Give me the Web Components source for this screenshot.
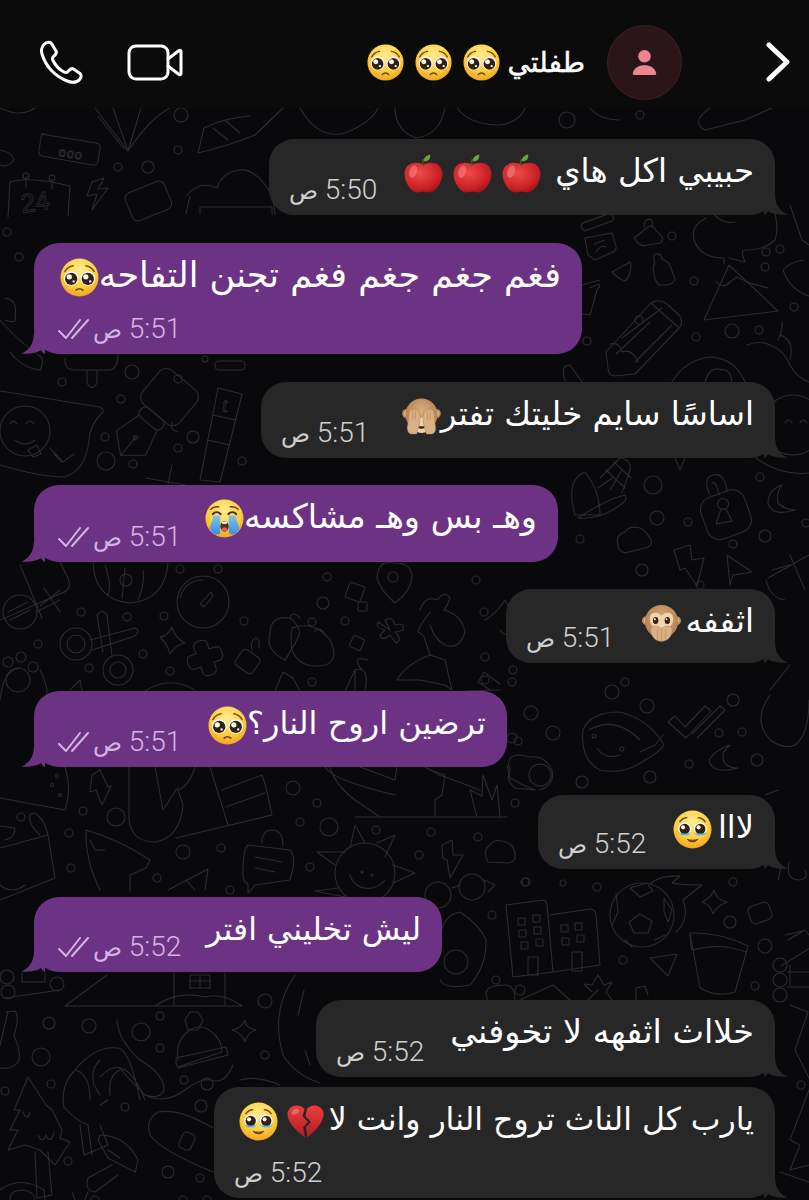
<!DOCTYPE html>
<html lang="ar">
<head>
<meta charset="utf-8">
<title>Chat</title>
<style>
html,body{margin:0;padding:0;background:#09080a}
body{font-family:"DejaVu Sans","Noto Sans",sans-serif;color:#fff}
</style>
</head>
<body>
<chat-screen>
  <chat-header slot="header" title-text="طفلتي"></chat-header>
  <chat-bubble side="in" time="5:50" style="--w:506px;--h:76px;--mt:31px;--fs:32.500px">حبيبي اكل هاي<chat-emoji name="apple" style="margin-right:14px"></chat-emoji><chat-emoji name="apple" style="margin-right:10px"></chat-emoji><chat-emoji name="apple" style="margin-right:10px"></chat-emoji></chat-bubble>
  <chat-bubble side="out" time="5:51" style="--w:548px;--h:111px;--mt:28px;--fs:35px">فغم جغم جغم فغم تجنن التفاحه<chat-emoji name="pleading"></chat-emoji></chat-bubble>
  <chat-bubble side="in" time="5:51" style="--w:514px;--h:76px;--mt:28px;--fs:32.500px">اساسًا سايم خليتك تفتر<chat-emoji name="seeno"></chat-emoji></chat-bubble>
  <chat-bubble side="out" time="5:51" style="--w:524px;--h:77px;--mt:27px;--fs:33.500px">وهـ بس وهـ مشاكسه<chat-emoji name="sob"></chat-emoji></chat-bubble>
  <chat-bubble side="in" time="5:51" style="--w:269px;--h:74px;--mt:27px;--fs:32.500px">اثففه<chat-emoji name="speakno" style="margin-right:5px"></chat-emoji></chat-bubble>
  <chat-bubble side="out" time="5:51" style="--w:473px;--h:76px;--mt:28px;--fs:32px">ترضين اروح النار؟<chat-emoji name="pleading"></chat-emoji></chat-bubble>
  <chat-bubble side="in" time="5:52" style="--w:237px;--h:74px;--mt:28px;--fs:32px">لااا<chat-emoji name="holding" style="margin-right:6px"></chat-emoji></chat-bubble>
  <chat-bubble side="out" time="5:52" style="--w:408px;--h:75px;--mt:28px;--fs:31.500px">ليش تخليني افتر</chat-bubble>
  <chat-bubble side="in" time="5:52" style="--w:459px;--h:77px;--mt:28px;--fs:33.500px">خلااث اثفهه لا تخوفني</chat-bubble>
  <chat-bubble side="in" time="5:52" style="--w:561px;--h:111px;--mt:10px;--fs:31.500px">يارب كل الناث تروح النار وانت لا<chat-emoji name="broken" style="margin-right:4px"></chat-emoji><chat-emoji name="holding" style="margin-right:8px"></chat-emoji></chat-bubble>
</chat-screen>

<script>
class ChatScreen extends HTMLElement{
  constructor(){super();
    const s=this.attachShadow({mode:'open'});
    s.innerHTML=`<style>
      :host{display:block;position:relative;width:809px;height:1200px;overflow:hidden;background:#09080a}
      .col{position:relative;display:flex;flex-direction:column;padding:0 34px}
      header{position:relative;z-index:2}
      chat-wallpaper{position:absolute;inset:0}
    </style><chat-wallpaper></chat-wallpaper><header><slot name="header"></slot></header><div class="col"><slot></slot></div>`;
  }
}
class ChatHeader extends HTMLElement{
  constructor(){super();
    const s=this.attachShadow({mode:'open'});
    const t=this.getAttribute('title-text')||'';
    s.innerHTML=`<style>
      :host{display:flex;align-items:center;box-sizing:border-box;height:108px;background:#0b0b0b;padding:16px 19px 0 40px}
      svg{display:block;fill:none;stroke:#fff;stroke-linecap:round;stroke-linejoin:round}
      .video{margin-left:44px}
      .title{margin-left:auto;display:flex;align-items:center;gap:11px;font:400 28px "DejaVu Sans",sans-serif;color:#fff;-webkit-text-stroke:.5px #fff}
      .title span{direction:rtl;margin-left:-4px}
      chat-emoji{--e:37px;margin:0;-webkit-text-stroke:0}
      .avatar{width:75px;height:75px;margin:0 84px 0 22px;border-radius:50%;background:#2a1519;border:1px solid #3a2226;box-sizing:border-box;display:flex;align-items:center;justify-content:center}
      .avatar svg{fill:#ee8490;stroke:none}
    </style>
    <svg width="43" height="44" viewBox="0 0 43 44" stroke-width="3"><path d="M4 4.500C6.500 2 10 1.500 11.500 3.500L16 11C17 13 16 14.500 14 16C12.500 17 12 18.500 13 20.500C15.500 25.500 19 29.500 24 32C26 33 27.500 32.500 28.500 31C30 29 31.500 28 33.500 29L40 33.500C41.500 34.500 41.500 37 40 39C37.500 42 33 43 28.500 41.500C15 37 5.500 26 2 14C1 10.500 1.500 7 4 4.500Z"/></svg>
    <svg class="video" width="56" height="37" viewBox="0 0 56 37" stroke-width="3"><rect x="2" y="2" width="39" height="33" rx="7"/><path d="M41 15L52 6.500C53 5.800 54 6.300 54 7.500V29.500C54 30.700 53 31.200 52 30.500L41 22"/></svg>
    <div class="title"><chat-emoji name="pleading"></chat-emoji><chat-emoji name="pleading"></chat-emoji><chat-emoji name="pleading"></chat-emoji><span>${t}</span></div>
    <div class="avatar"><svg width="25" height="27" viewBox="0 0 28 30"><circle cx="14" cy="8" r="7"/><path d="M2.500 29C1 29 .5 28 1 26.500C2.500 21 7.500 18 14 18C20.500 18 25.500 21 27 26.500C27.500 28 27 29 25.500 29Z"/></svg></div>
    <svg width="24" height="40" viewBox="0 0 24 40" stroke-width="5"><path d="M3 3L21 20L3 37"/></svg>`;
  }
}
class ChatBubble extends HTMLElement{
  constructor(){super();
    const s=this.attachShadow({mode:'open'});
    const out=this.getAttribute('side')==='out', time=this.getAttribute('time')||'';
    const bg=out?'#6c3384':'#272727';
    const mc=out?'#d4b3e4':'#cfcfcf';
    s.innerHTML=`<style>
      :host{display:block;position:relative;box-sizing:border-box;width:var(--w);height:var(--h);margin-top:var(--mt);border-radius:25px;background:${bg};flex:none;align-self:${out?'flex-start':'flex-end'}}
      .wrap{display:grid;box-sizing:border-box;height:100%;padding:12px 21px 11px ${out?'24px':'20px'};color:#fff}
      .text{grid-area:1/1;justify-self:end;align-self:start;direction:rtl;white-space:nowrap;font:400 var(--fs)/40px "DejaVu Sans",sans-serif}
      .meta{grid-area:1/1;justify-self:start;align-self:end;display:flex;align-items:center;gap:3px;color:${mc};height:28px}
      .t{direction:rtl;font:300 28px/28px Roboto,"DejaVu Sans",sans-serif;white-space:nowrap}
      .t i{font:300 24px/28px "DejaVu Sans",sans-serif;font-style:normal}
      .tail{position:absolute;bottom:0;${out?'left:-13px;transform:scaleX(-1)':'right:-13px'}}
      .tail path{fill:${bg}}
      svg.chk{fill:none;stroke:${mc};stroke-width:2;stroke-linecap:round;stroke-linejoin:round;display:block}
    </style>
    <div class="wrap">
      <div class="text"><slot></slot></div>
      <div class="meta">${out?'<svg class="chk" width="32" height="22" viewBox="0 0 32 22"><path d="M1 13L8 20L22 2"/><path d="M14 20L30 2"/></svg>':''}<span class="t">${time} <i>ص</i></span></div>
    </div>
    <svg class="tail" width="24" height="22" viewBox="0 0 24 22"><path d="M0 0H11C11 10 14 17 23.500 21.700C15 22 8 21 4 18C3 20 1.500 21.500 0 22Z"/></svg>`;
  }
}
const G=`<defs>
<radialGradient id="f" cx=".5" cy=".3" r=".78"><stop offset="0" stop-color="#ffeb94"/><stop offset=".55" stop-color="#fcd03f"/><stop offset=".88" stop-color="#f4a622"/><stop offset="1" stop-color="#e58a18"/></radialGradient>
<radialGradient id="m" cx=".5" cy=".4" r=".7"><stop offset="0" stop-color="#dcae7c"/><stop offset="1" stop-color="#a9764a"/></radialGradient>
<radialGradient id="a" cx=".4" cy=".35" r=".75"><stop offset="0" stop-color="#ef4a4a"/><stop offset=".7" stop-color="#c81f25"/><stop offset="1" stop-color="#8d1116"/></radialGradient>
<linearGradient id="h" x1="0" y1="0" x2="0" y2="1"><stop offset="0" stop-color="#e8403f"/><stop offset="1" stop-color="#b41a22"/></linearGradient>
<linearGradient id="b" x1="0" y1="0" x2="0" y2="1"><stop offset="0" stop-color="#7fc4ef"/><stop offset="1" stop-color="#3a8fdc"/></linearGradient>
</defs>`;
const FACE='<circle cx="20" cy="20" r="19.500" fill="url(#f)"/>';
const EM={
 pleading:FACE+`<path d="M5 14C7 10.500 10 8.500 13.500 8M35 14C33 10.500 30 8.500 26.500 8" fill="none" stroke="#7a4a12" stroke-width="1.500" stroke-linecap="round"/>
  <circle cx="11.500" cy="21" r="7.500" fill="#fff"/><circle cx="28.500" cy="21" r="7.500" fill="#fff"/><circle cx="11.500" cy="21.500" r="6.300" fill="#33200f"/><circle cx="28.500" cy="21.500" r="6.300" fill="#33200f"/>
  <circle cx="9.500" cy="19.300" r="2.700" fill="#fff"/><circle cx="26.500" cy="19.300" r="2.700" fill="#fff"/><circle cx="14" cy="24" r="1.200" fill="#fff"/><circle cx="31" cy="24" r="1.200" fill="#fff"/>
  <path d="M16.500 33C18.500 31.200 21.500 31.200 23.500 33" fill="none" stroke="#6b3d10" stroke-width="1.600" stroke-linecap="round"/>`,
 holding:FACE+`<path d="M7 12C9 9.500 11.500 8 14 8M33 12C31 9.500 28.500 8 26 8" fill="none" stroke="#7a4a12" stroke-width="1.500" stroke-linecap="round"/>
  <circle cx="12" cy="19.500" r="6.600" fill="#fff"/><circle cx="28" cy="19.500" r="6.600" fill="#fff"/><circle cx="12" cy="19.500" r="5.300" fill="#33200f"/><circle cx="28" cy="19.500" r="5.300" fill="#33200f"/>
  <circle cx="10.300" cy="17.800" r="2.100" fill="#fff"/><circle cx="26.300" cy="17.800" r="2.100" fill="#fff"/>
  <path d="M5.500 22.500C7 27.500 17 27.500 18.500 22.500C16.500 24.700 7.500 24.700 5.500 22.500ZM21.500 22.500C23 27.500 33 27.500 34.500 22.500C32.500 24.700 23.500 24.700 21.500 22.500Z" fill="#58b3ea"/>
  <path d="M14.500 30C17 33.500 23 33.500 25.500 30C23 31.300 17 31.300 14.500 30Z" fill="#6b3d10" stroke="#6b3d10" stroke-linejoin="round"/>`,
 sob:FACE+`<path d="M6 10.500C8.500 8 11 7.500 14 8M34 10.500C31.500 8 29 7.500 26 8" fill="none" stroke="#6b3d10" stroke-width="1.500" stroke-linecap="round"/>
  <path d="M8 15.500C10 12.800 14 12.800 16 15.500M24 15.500C26 12.800 30 12.800 32 15.500" fill="none" stroke="#4a2c10" stroke-width="2" stroke-linecap="round"/>
  <path d="M8.500 17H15.500V35C13 37 10.500 36.500 8 35L4.500 30C6 26 8 22 8.500 17ZM24.500 17H31.500C32 22 34 26 35.500 30L32 35C29.500 36.500 27 37 24.500 35Z" fill="url(#b)"/>
  <ellipse cx="20" cy="28" rx="4.300" ry="5.500" fill="#5c2a12"/><ellipse cx="20" cy="24.300" rx="3" ry="1.300" fill="#fff"/><ellipse cx="20" cy="31" rx="2.800" ry="2" fill="#e0615a"/>`,
 apple:`<path d="M20 11C14 7.500 4 8 2.500 19C2 28 8 39 14 39.500C16.500 39.700 18 38.500 20 38.500C22 38.500 23.500 39.700 26 39.500C32 39 38 28 37.500 19C36 8 26 7.500 20 11Z" fill="url(#a)"/>
  <ellipse cx="10.500" cy="18" rx="3.500" ry="6.500" fill="#f58b86" opacity=".55" transform="rotate(15 10.500 18)"/>
  <path d="M19.500 12C19.500 9 18.500 7 20 5" stroke="#6b4a24" stroke-width="1.300" fill="none"/>
  <path d="M20 7.500C20.500 3 23.500 1 26 .5C27 4 25 8 20 7.500Z" fill="#63a832"/>`,
 broken:`<path d="M19 7C15 2 5 2 2 9.500C-.5 17 7 27 19.500 36.500L17.500 26L22.500 20.500L17 14.500Z" fill="url(#h)"/><path d="M21.500 7C25.500 2 35 2 38 9.500C40.500 17 33 27 22 36.500L20.500 26L25.500 20.500L20 14.500Z" fill="url(#h)"/>
  <ellipse cx="9.500" cy="10" rx="4" ry="2.500" fill="#f58b86" opacity=".6" transform="rotate(-30 9.500 10)"/>`,
 seeno:`<circle cx="5" cy="17" r="4.800" fill="#c48c5a"/><circle cx="35" cy="17" r="4.800" fill="#c48c5a"/><circle cx="5" cy="17" r="2.800" fill="#e5bd92"/><circle cx="35" cy="17" r="2.800" fill="#e5bd92"/>
  <circle cx="20" cy="18" r="16.500" fill="url(#m)"/>
  <ellipse cx="20" cy="29" rx="8.500" ry="8" fill="#efd4ae"/><path d="M15.500 30C18 33.500 22 33.500 24.500 30Z" fill="#3e2210"/>
  <path d="M6 28C4.500 33 6 37 9 38H15C16.500 33 18.500 27 18.500 22C18.500 18 17.500 15 16 13C13 12 9 12 7.500 15C7 19 6.500 23 6 28ZM34 28C35.500 33 34 37 31 38H25C23.500 33 21.500 27 21.500 22C21.500 18 22.500 15 24 13C27 12 31 12 32.500 15C33 19 33.500 23 34 28Z" fill="#d9b184" stroke="#a67b4e" stroke-width=".5"/>
  <path d="M11 14V23M14 13.500V23M26 13.500V23M29 14V23" stroke="#a67b4e" stroke-width=".5"/>`,
 speakno:`<circle cx="4.500" cy="17" r="4.500" fill="#c48c5a"/><circle cx="35.500" cy="17" r="4.500" fill="#c48c5a"/><circle cx="4.500" cy="17" r="2.600" fill="#e5bd92"/><circle cx="35.500" cy="17" r="2.600" fill="#e5bd92"/>
  <circle cx="20" cy="18" r="17" fill="url(#m)"/>
  <path d="M20 12C16 7 8 8 8 15C8 20 11 24 14 25H26C29 24 32 20 32 15C32 8 24 7 20 12Z" fill="#efd4ae"/>
  <ellipse cx="14" cy="17" rx="2.800" ry="3.600" fill="#3a2010"/><ellipse cx="26" cy="17" rx="2.800" ry="3.600" fill="#3a2010"/><circle cx="13.200" cy="15.600" r="1" fill="#fff"/><circle cx="25.200" cy="15.600" r="1" fill="#fff"/>
  <path d="M9 26C10 23 13 22 16 23L20 25L24 23C27 22 30 23 31 26C31 33 27 38 20 38.500C13 38 9 33 9 26Z" fill="#d9b184" stroke="#a67b4e" stroke-width=".5"/>
  <path d="M16 26V36M20 26V38M24 26V36" stroke="#a67b4e" stroke-width=".5"/>`
};
class ChatEmoji extends HTMLElement{
  constructor(){super();
    const s=this.attachShadow({mode:'open'});
    const n=this.getAttribute('name');
    const vb=n==='apple'?'viewBox="2 0 36 40" preserveAspectRatio="none"':'viewBox="0 0 40 40"';
    s.innerHTML=`<style>:host{display:inline-block;width:var(--e,39px);height:var(--e,39px);vertical-align:middle}svg{display:block;width:100%;height:100%}</style>
    <svg ${vb}>${G}${EM[n]||''}</svg>`;
  }
}
const DOTS=[[181,115,7],[567,120,8],[178,150,4],[118,167,4],[148,167,6],[640,115,4],[7,232,4],[19,257,4],[205,359,3],[178,379,4],[132,372,7],[62,382,4],[121,399,4],[105,437,4],[193,437,6],[178,448,4],[106,461,9],[133,464,4],[242,461,4],
[672,236,4],[694,281,4],[639,320,4],[696,337,4],[732,331,7],[759,330,4],[587,341,4],[780,249,4],[766,252,4],[765,267,4],[794,307,4],
[653,485,9],[657,518,7],[688,522,4],[580,539,4],[642,570,6],[765,536,6],[733,544,4],[760,477,4],[806,523,4],[700,585,4],
[81,612,4],[38,644,4],[127,617,4],[143,654,4],[164,616,4],[244,621,4],[170,671,4],[89,668,4],[312,622,4],[323,603,6],[327,577,4],[345,621,4],[476,699,4],[180,569,4],[218,569,4],[312,682,4],[485,657,4],[512,682,4],[513,670,4],[484,612,4],
[612,692,7],[647,706,7],[531,713,7],[553,733,7],[582,782,6],[650,777,6],[733,700,6],[757,760,6],[689,764,4],[719,733,4],[742,732,4],[476,580,4],[485,680,4],[518,741,4],[625,682,4],[512,738,5],[515,803,4],
[116,817,9],[293,788,7],[329,827,9],[183,852,7],[83,811,4],[69,833,4],[71,868,4],[221,848,4],[157,878,4],[317,803,4],[300,822,4],[310,867,4],[376,830,4],[431,832,4],[478,837,4],[419,855,4],[526,882,4],[21,817,4],[230,890,4],
[525,882,4],[597,887,4],[733,882,4],[492,915,4],[623,960,4],[496,980,4],[730,922,6],[765,946,7],[755,986,4],[563,883,3],[801,1085,4],[520,990,5],
[49,1023,6],[89,1026,7],[41,1057,9],[51,1084,4],[5,1091,4],[125,1107,4],[141,1032,9],[160,1016,4],[160,1048,4],[184,1080,4],[207,1084,6],[201,1106,6],[265,1001,7],[265,1055,4],[68,1161,4],[168,1172,6],[200,1178,4],[95,1200,4],[183,1200,4],[207,1200,4]];
const ART=`
<!-- top strip -->
<path d="M41 134L96 143Q101 144 100 149L98 161Q97 166 92 165L42 156Q38 155 39 150L41 138Q41 134 45 134Z"/>
<text x="58" y="156" font-size="13" font-family="Liberation Sans" transform="rotate(9 58 156)" fill="none" letter-spacing="1">ooo</text>
<path d="M95 108L128 151L141 108M113 108L128 151M170 108Q150 118 128 151M98 116L124 149"/>
<path d="M198 153L204 128Q224 118 250 116M198 153Q225 147 255 135L283 108M213 128L228 140M225 120L240 133"/>
<path d="M10 182Q30 176 70 186L68 216M10 182L8 217M26 177V187M52 179V189"/><circle cx="26" cy="176" r="3"/><circle cx="52" cy="178" r="3"/>
<text x="22" y="213" font-size="26" font-family="Liberation Sans" transform="rotate(-8 22 213)">24</text>
<path d="M92 182L87 196L97 194L92 210L108 188L98 189L104 178Z"/>
<g transform="rotate(-22 148 200)"><rect x="127" y="186" width="42" height="30" rx="6"/></g>
<path d="M187 195Q200 180 217 188Q222 172 240 170Q256 168 272 195M190 196L186 214M272 195L275 214M200 214V207H272V214"/>
<path d="M300 108Q318 140 345 133Q372 122 378 108M395 108Q395 130 416 138Q440 135 445 108M457 108Q470 125 500 125Q520 122 525 108M590 108Q600 120 620 120M710 108Q690 122 705 130L745 120L772 108"/>
<path d="M0 150Q12 152 14 160Q8 168 0 165M0 108Q20 118 35 108"/>
<!-- right of bubble 2 -->
<g transform="rotate(-20 598 225)"><rect x="582" y="218" width="33" height="8" rx="3"/></g>
<path d="M585 238L612 233L616 246Q617 250 613 252L595 260L588 255ZM594 244L605 240M596 252Q600 245 606 247"/>
<path d="M634 238L648 227Q651 225 653 227L662 237Q664 240 660 243L648 245Q642 247 638 243ZM644 227Q644 219 650 219Q654 220 652 226"/>
<path d="M612 272Q622 267 630 262Q632 264 630 272Q628 280 624 281Q618 278 612 272Z"/>
<path d="M655 262Q652 256 656 254Q661 253 662 259L669 263L675 279Q674 284 666 285L660 285Q656 283 655 279L653 268Z"/>
<path d="M704 320L729 265L778 311Z"/><path d="M724 264V258Q700 258 694 240Q690 226 706 218M729 258L745 262Q740 250 745 250Q765 250 775 240Q780 225 772 205"/>
<path d="M716 281Q722 290 730 282L737 277L750 283L768 288M709 208Q720 225 735 222"/>
<path d="M590 288Q605 280 597 290L590 315L578 313M582 285L600 280"/>
<path d="M608 368L606 352L651 303Q660 298 667 304L680 316Q683 322 680 327L635 374L614 376Q608 375 608 368ZM622 338L662 308M651 303L678 327M616 354L650 322M635 362L672 325"/><path d="M610 344Q620 342 622 352Q632 348 638 362"/>
<path d="M804 260Q790 262 783 270Q790 290 809 296M747 345Q760 340 770 345Q784 350 790 365Q797 378 809 382M778 340Q783 330 782 322M790 360Q795 340 780 335"/>
<path d="M672 382Q685 360 710 357Q735 358 745 382M705 382Q710 365 722 370Q730 368 732 382"/>
<path d="M790 205L802 240L809 245M565 380Q560 365 570 365L582 382"/>
<!-- left of bubble 3 -->
<path d="M0 391L100 407Q106 410 101 414Q90 425 89 440Q86 470 65 477Q40 477 0 465"/>
<circle cx="25" cy="431" r="25"/><path d="M10 424Q13 418 17 424M26 424Q29 418 34 424M28 450L37 445L41 454L33 457Z M15 440Q25 448 35 440"/><path d="M50 448L63 462L74 454M54 454L62 462"/>
<path d="M65 358Q64 370 75 370H110Q118 368 118 354M87 370V383Q92 392 97 383V370"/><rect x="215" y="361" width="30" height="9" rx="4"/>
<g transform="rotate(40 160 410)"><rect x="135" y="372" width="48" height="44" rx="9"/><rect x="145" y="416" width="28" height="12" rx="5"/><path d="M147 428L140 454L159 470L178 454L171 428M159 447V470"/><circle cx="159" cy="447" r="2"/></g>
<path d="M172 422Q170 432 178 431"/>
<path d="M218 388L242 394L220 482L200 480ZM213 415L236 420M207 440L230 445"/><text x="222" y="412" font-size="20" font-family="Liberation Serif" font-style="italic">t</text>
<path d="M146 478L270 500M172 465L168 484M176 482"/>
<path d="M0 320Q22 345 40 356Q45 360 40 370Q22 368 10 352M5 298Q18 300 15 315Q18 325 5 320"/>
<!-- corn, lock, moon etc. -->
<path d="M575 515Q565 480 585 472Q600 490 600 515L575 515ZM578 518Q605 500 625 495Q628 500 620 505Q600 520 578 518M600 478L620 458Q632 460 630 470L622 493M606 470L625 488M614 462L631 478M598 488L612 478M610 490L622 470"/>
<path d="M710 495Q702 478 713 475Q725 472 727 492M719 495Q716 480 712 483"/><g transform="rotate(-20 725 515)"><rect x="703" y="493" width="46" height="44" rx="13"/></g><circle cx="723" cy="504" r="5.500"/><path d="M721 509L726 509L732 521L716 524Z"/>
<path d="M782 485Q768 490 768 503Q772 517 795 510Q785 510 778 503Q776 492 782 485Z"/>
<path d="M618 545Q615 535 625 532Q630 525 640 528Q645 530 650 538Q655 545 645 548L625 553Q618 551 618 545Z"/>
<path d="M674 550L690 545L692 560L704 558L697 586L685 568L680 570Z"/><path d="M727 555L752 572L733 575L730 585Z"/>
<path d="M768 578L809 555M772 570L790 565M790 555L805 590M766 580Q770 598 785 600"/>
<circle cx="793" cy="425" r="30"/><path d="M785 423Q788 417 792 423M800 423Q803 417 807 423"/>
<path d="M756 458Q780 476 809 473"/><path d="M675 458L680 470L685 458"/>
<!-- row 560-690 -->
<path d="M20 565L42 618M0 620L62 593Q72 590 68 578L60 562M40 606L60 590M44 588L60 612"/><circle cx="20" cy="612" r="17"/><path d="M8 612L28 602M10 620L30 610"/><path d="M36 612L60 600"/>
<path d="M93 563Q95 600 130 603Q165 600 168 563M105 565Q112 585 108 595M125 568L122 598M143 570Q145 585 138 600"/><circle cx="126" cy="580" r="6"/>
<circle cx="203" cy="602" r="26"/><path d="M180 598Q185 580 203 580M200 604L211 592L213 596L204 607Z"/>
<circle cx="76" cy="644" r="16"/><circle cx="76" cy="644" r="9"/><circle cx="118" cy="670" r="15"/><circle cx="118" cy="670" r="8"/><path d="M92 650L135 636Q141 630 135 628L90 640M97 615Q102 608 107 615L112 656M97 615L103 652"/>
<path d="M172 627Q175 638 185 643Q175 645 170 654Q168 645 160 637Q168 636 172 627Z"/>
<g transform="rotate(-20 205 658)"><path d="M198 645Q198 640 205 640Q212 640 212 645V651H219Q223 652 223 658Q223 664 219 665H212V671Q212 676 205 676Q198 676 198 671V665H191Q187 664 187 658Q187 652 191 651H198Z"/></g>
<g transform="rotate(35 248 660)"><rect x="238" y="652" width="21" height="19" rx="4"/></g><path d="M252 650Q250 640 256 638Q260 638 259 648"/>
<path d="M270 634Q265 650 285 660Q298 640 300 632Q296 622 290 618Q270 615 270 634ZM290 618Q292 610 300 618"/><path d="M292 628Q315 620 330 640Q340 660 325 665Q300 670 292 650Q290 640 292 628Z M314 632Q320 625 325 635"/>
<path d="M393 563Q378 560 377 578Q380 590 395 603Q412 590 412 575Q410 562 393 563Z"/><circle cx="393" cy="577" r="5"/>
<g transform="rotate(20 355 592)"><rect x="347" y="584" width="16" height="16" rx="2"/></g><rect x="358" y="602" width="9" height="9" rx="1"/><g transform="rotate(25 357 643)"><rect x="351" y="637" width="12" height="12" rx="2"/></g>
<path d="M390 630L385 620Q392 615 395 625Q405 622 403 630Q398 632 395 632Q403 640 396 643L390 635Q382 642 380 635L385 630Q375 628 378 622Z"/>
<path d="M420 610Q425 595 437 600Q445 590 450 598Q448 605 444 610Q462 615 465 632Q460 650 445 645Q435 640 430 625"/><path d="M430 612Q420 625 418 632Q425 635 425 640L430 655Q405 665 397 680H420L445 685L452 690M430 655L445 660L452 690"/>
<path d="M490 690L478 682L484 672L500 684"/><path d="M485 620Q495 615 505 600L518 625Q505 640 500 630"/>
<path d="M0 700Q3 670 20 668M40 670Q50 690 46 700"/><circle cx="18" cy="680" r="12"/><circle cx="8" cy="662" r="5"/><circle cx="21" cy="657" r="5"/><circle cx="33" cy="667" r="5"/>
<path d="M70 690L80 680L82 691M145 691Q170 675 195 690M275 691L283 672L293 678L300 691"/>
<path d="M345 691L355 670Q370 665 365 691M355 690V670M362 670Q350 655 368 660"/><path d="M465 691L500 690"/>
<!-- cup etc -->
<path d="M583 730Q590 712 620 712Q650 720 664 745Q660 752 645 760Q625 775 600 770Q580 760 583 730ZM589 730Q615 715 640 740M640 752L655 745L663 735"/><circle cx="594" cy="736" r="2"/><circle cx="622" cy="749" r="2"/><path d="M597 748Q605 760 620 755"/>
<path d="M668 722L675 716L685 727L705 706L711 711L686 738ZM692 734L720 706L725 710L697 738"/>
<path d="M730 745Q715 750 709 760Q712 775 738 768Q722 768 723 755Q724 750 730 745Z"/>
<path d="M510 770Q505 755 520 755L530 757Q545 755 552 770Q555 785 540 790M510 770Q505 780 515 788L535 790"/><circle cx="540" cy="775" r="11"/>
<path d="M765 795L778 790M770 695Q752 720 770 740Q785 750 795 745Q809 735 809 700"/><path d="M790 665L770 690"/>
<path d="M507 765L510 778L525 786L535 790"/>
<!-- row 770-890 -->
<path d="M0 798L65 810Q72 790 65 767"/><circle cx="52" cy="785" r="1.500"/><circle cx="60" cy="795" r="1.500"/><circle cx="57" cy="776" r="1.500"/>
<path d="M92 775L100 770L108 787L111 786L102 805L96 790L90 792Z"/>
<path d="M129 767V820Q132 842 155 842Q180 838 183 805L178 790Q190 785 195 767M155 767L163 810L178 787"/><path d="M176 838L272 815M210 767L228 825M222 790L262 775Q266 785 272 815M226 807L265 793"/>
<path d="M0 848L48 835L55 878Q30 888 0 900M0 826L15 828Q15 838 5 840M40 835Q28 825 30 815Q35 808 45 825L48 835M0 885Q12 895 25 885"/>
<path d="M86 830Q120 840 150 860L146 868L130 875L130 891M86 830Q85 860 100 890M90 840L95 850L105 850"/>
<path d="M168 890L208 869L205 890M186 880L195 890"/>
<path d="M248 845L290 850Q295 855 293 868L290 880L255 885L248 893V884Q242 882 243 870Q243 850 248 845ZM255 857L282 862M255 868L275 872"/><path d="M262 843Q262 830 272 830Q283 830 283 846"/>
<circle cx="365" cy="873" r="30"/><path d="M350 848L355 825L365 843M377 843L395 835L385 857M393 865L415 873L393 883M335 865L317 852L345 852M338 888L315 891L345 897"/><path d="M350 875Q355 890 372 888Q382 885 385 880"/><circle cx="362" cy="872" r="1"/><circle cx="372" cy="875" r="1"/>
<path d="M355 817H507M330 767Q335 785 355 800L380 817M325 767Q332 780 395 795"/><path d="M360 767L395 780L397 767M425 767L440 775L480 790"/><path d="M477 817L470 790L482 796L483 775L492 800L497 785L500 817"/><path d="M430 770L445 775L442 795L435 800L435 817"/>
<path d="M442 845L452 840L453 855L463 855L450 878L447 860L443 858Z"/><path d="M488 862Q482 850 490 845Q495 838 505 842Q515 845 515 855Q516 862 508 863Z"/>
<circle cx="472" cy="887" r="13"/><circle cx="438" cy="895" r="13"/><path d="M452 888L460 885M484 880L495 885L488 892"/>
<!-- buildings / ball -->
<path d="M440 945Q440 915 460 912Q480 925 486 940Q487 965 470 985Q445 990 440 980"/><circle cx="456" cy="962" r="12"/>
<path d="M506 905L543 900Q546 900 547 905L553 972L513 977ZM550 915L590 909Q595 909 596 915L600 965L553 972"/>
<g><rect x="518" y="918" width="7" height="7"/><rect x="533" y="915" width="7" height="7"/><rect x="519" y="930" width="7" height="7"/><rect x="534" y="927" width="7" height="7"/><rect x="521" y="942" width="7" height="7"/><rect x="536" y="939" width="7" height="7"/><rect x="561" y="925" width="7" height="7"/><rect x="575" y="923" width="7" height="7"/><rect x="562" y="938" width="7" height="7"/><rect x="577" y="935" width="7" height="7"/><rect x="528" y="957" width="10" height="18"/><rect x="572" y="952" width="10" height="19"/></g>
<circle cx="642" cy="915" r="32"/><path d="M640 914L652 921L648 933L634 933L629 922ZM630 888L647 883L653 891L640 897ZM664 898L672 910L668 922L664 912ZM616 893L618 912L612 925M625 940L632 947M655 940L665 935"/><path d="M650 884Q660 875 680 876L672 883Q680 885 702 885L683 900Q690 920 676 932"/>
<path d="M714 890Q716 900 727 902Q717 906 713 914Q711 905 702 902Q711 898 714 890Z"/><g transform="rotate(-20 760 913)"><rect x="749" y="904" width="22" height="18" rx="5"/></g>
<path d="M690 933Q720 932 748 946L735 992Q718 998 700 988ZM690 933Q690 945 692 950Q720 942 746 952"/>
<path d="M650 958L677 954L668 976Z"/>
<path d="M598 975L604 985L612 982L606 992L612 1000M598 990L588 1000M598 975L592 985L584 984L592 992"/><path d="M636 1000V988L645 986L648 995"/><path d="M520 1000L553 985L570 1000"/><path d="M488 1000Q480 985 505 985Q515 985 515 1000"/>
<path d="M788 940L805 930L809 935M781 966L810 948M785 935L803 931M778 880Q785 860 770 865M789 862Q785 880 800 880Q809 878 805 870"/><circle cx="780" cy="965" r="7"/><circle cx="780" cy="980" r="7"/><circle cx="780" cy="995" r="7"/><path d="M787 972H809M787 987H809M790 965V985"/>
<!-- bottom -->
<path d="M65 1006L107 975M65 1006H242M174 973V1006M225 973V1006M155 1006Q178 990 205 997Q222 992 242 1006"/><rect x="190" y="975" width="20" height="13"/><path d="M200 975V988M190 981H210"/>
<circle cx="7" cy="977" r="7"/><circle cx="57" cy="984" r="7"/><circle cx="8" cy="992" r="7"/><path d="M5 998L60 990M22 973V982H45V973"/>
<path d="M6 1012L15 1011Q20 1016 14 1035Q22 1055 18 1062Q12 1070 0 1068M8 1012L0 1045"/>
<path d="M28 1077L14 1110L20 1110L10 1130L18 1130L8 1150L25 1145L40 1150L55 1165L70 1142L60 1138L62 1130L52 1110L46 1105L28 1077ZM35 1152L37 1198L52 1195L48 1152"/><path d="M23 1112Q27 1122 30 1112M38 1135Q42 1145 46 1135Q50 1145 54 1133"/>
<path d="M100 1077Q125 1050 145 1100M64 1108Q60 1085 75 1070Q95 1045 118 1048Q130 1050 140 1100M76 1070Q90 1075 90 1100M100 1060Q90 1070 94 1085L100 1095M80 1125L84 1155L108 1145L100 1125M65 1108Q75 1120 88 1125M88 1125L92 1155M100 1105L108 1100M120 1070Q108 1075 110 1095"/>
<path d="M117 1020Q118 1040 140 1060Q165 1075 164 1090Q160 1100 145 1095Q125 1075 120 1068M145 1095Q165 1105 185 1090Q200 1078 210 1080Q225 1085 233 1065"/>
<path d="M178 1060Q175 1040 190 1030Q203 1022 215 1035Q222 1042 222 1052L178 1067Q176 1066 176 1060ZM176 1058L226 1047L228 1055L178 1068"/><path d="M185 1020L190 1012L198 1012L203 1020L198 1030L188 1030Z"/>
<path d="M245 1020Q245 1028 256 1030Q247 1033 245 1042Q242 1033 232 1030Q242 1028 245 1020Z"/>
<path d="M100 1135Q125 1135 138 1160Q135 1175 135 1172L108 1158L98 1140ZM112 1165L88 1178Q84 1190 95 1192L118 1175M108 1150L120 1158"/>
<path d="M213 1128Q180 1108 158 1112Q145 1120 150 1135Q160 1150 213 1172"/><g transform="rotate(25 188 1140)"><rect x="181" y="1133" width="13" height="17" rx="4"/></g>
<path d="M0 1190Q20 1175 44 1190L45 1200M10 1200Q10 1190 23 1190Q35 1192 35 1200M72 1192L75 1200M88 1192L85 1200"/>
<path d="M295 975Q270 1010 283 1055Q295 1075 320 1083M304 990L298 1015M305 1050L310 1065M240 1080Q255 1075 280 1085"/>
<path d="M790 1005L808 1012L795 1050L809 1078M809 1090L790 1140L800 1145L790 1170L809 1165M780 1172L809 1182"/>
`;
class ChatWallpaper extends HTMLElement{
  constructor(){super();
    const s=this.attachShadow({mode:'open'});
    const c=DOTS.map(d=>`<circle cx="${d[0]}" cy="${d[1]}" r="${d[2]}"/>`).join('');
    s.innerHTML=`<style>:host{display:block;pointer-events:none}svg{display:block;fill:none;stroke:#2e2a30;stroke-width:1.100;stroke-linecap:round;stroke-linejoin:round}text{fill:none;stroke:#2e2a30;stroke-width:.8}</style>
    <svg width="809" height="1200" viewBox="0 0 809 1200">${c}${ART}</svg>`;
  }
}
customElements.define('chat-emoji',ChatEmoji);
customElements.define('chat-wallpaper',ChatWallpaper);
customElements.define('chat-bubble',ChatBubble);
customElements.define('chat-header',ChatHeader);
customElements.define('chat-screen',ChatScreen);
</script>
</body>
</html>
